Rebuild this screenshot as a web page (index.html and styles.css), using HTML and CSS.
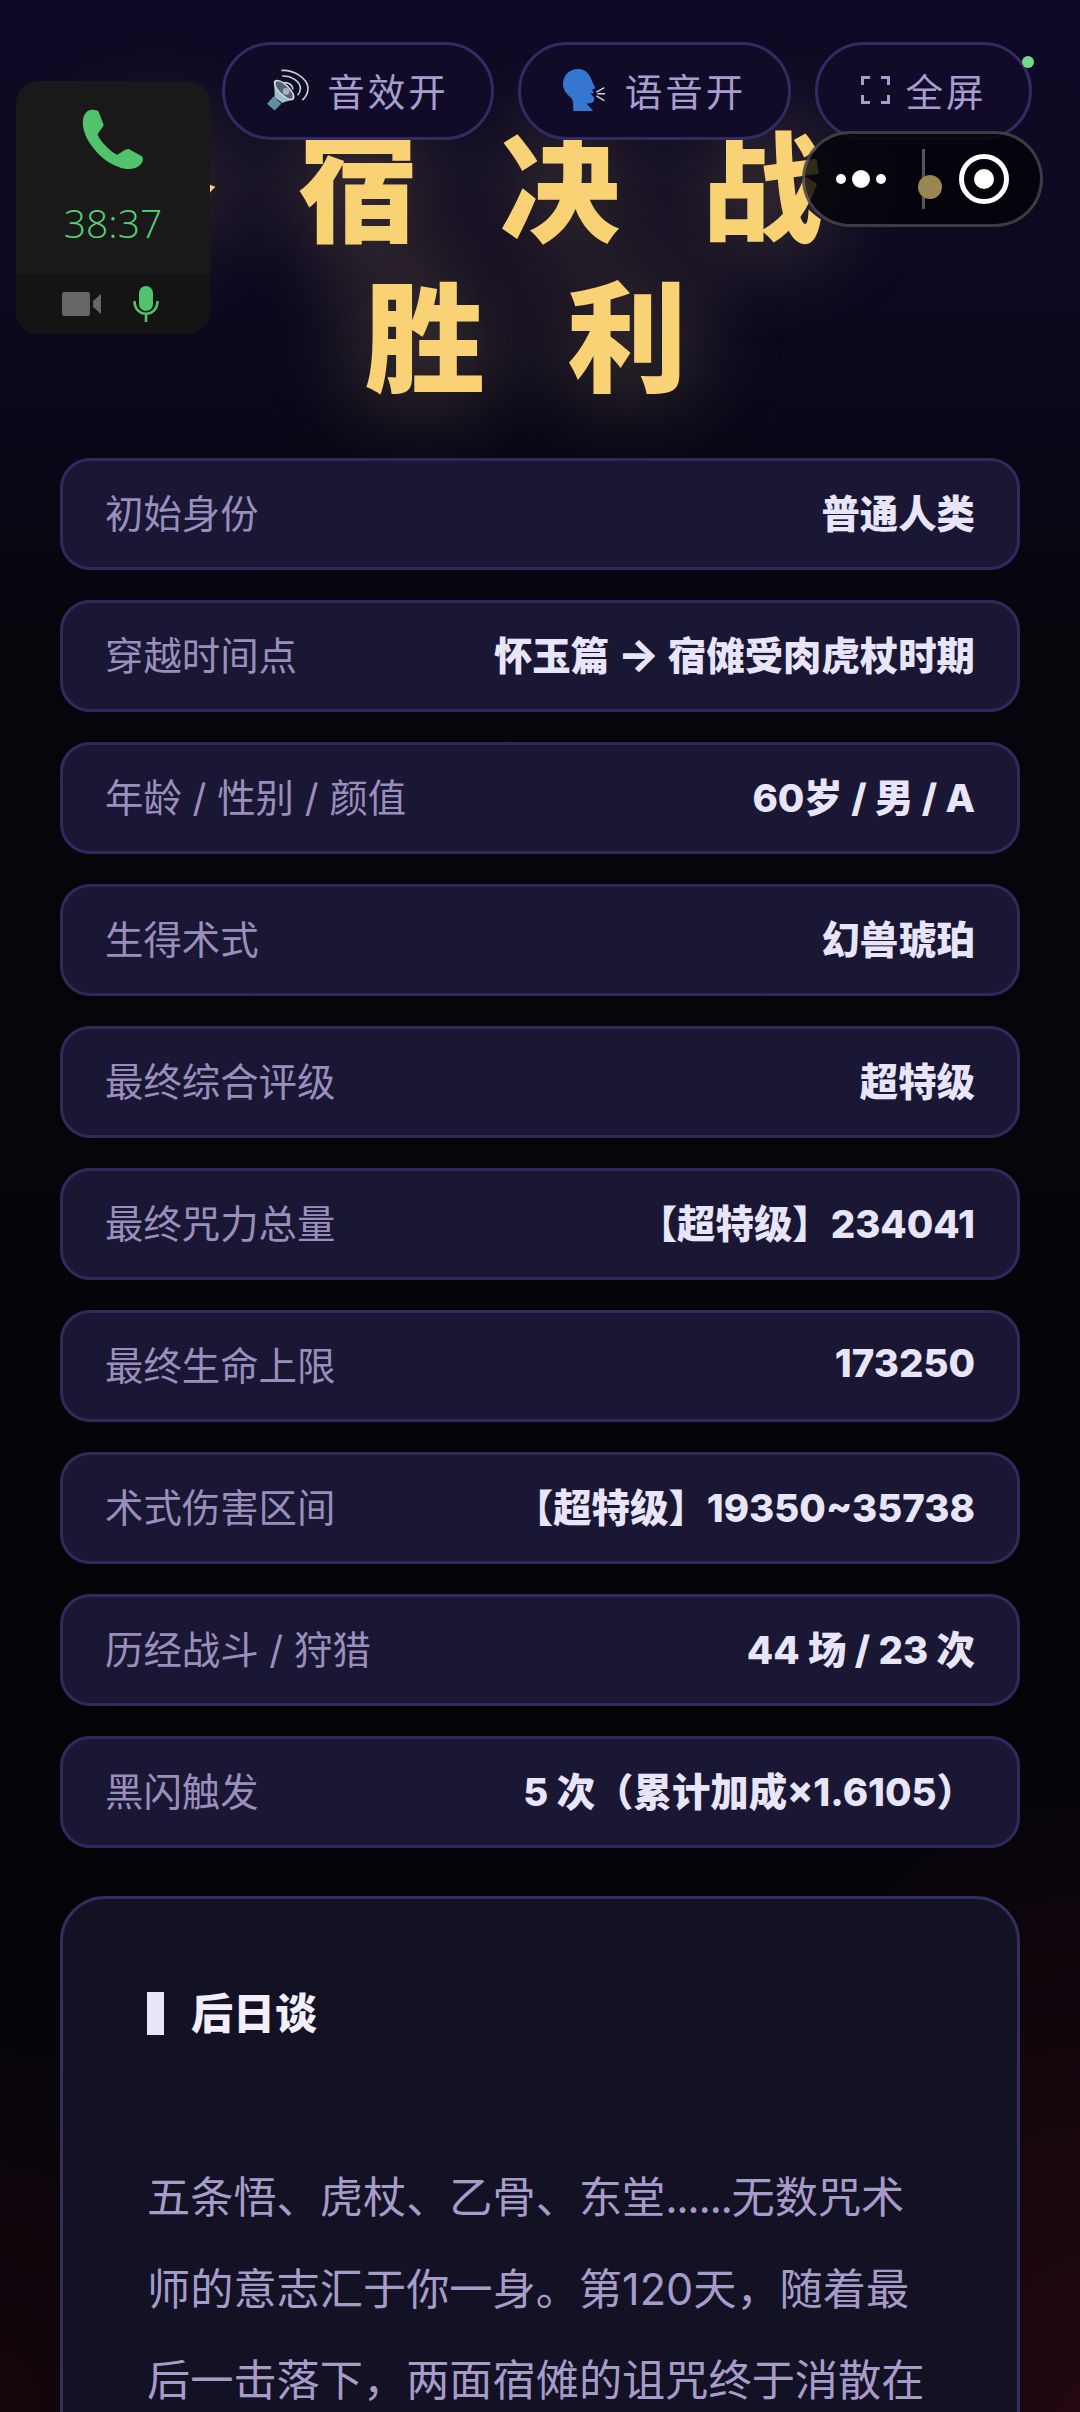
FILE: index.html
```html
<!DOCTYPE html>
<html lang="zh-CN">
<head>
    <meta charset="UTF-8">
    <meta name="viewport" content="width=device-width, initial-scale=1.0">
    <title>终宿决战 胜利</title>
    <link rel="stylesheet" href="styles.css">
</head>
<body>
    <div class="page">
        <div class="toolbar">
            <button class="tool-btn sound-btn" type="button">
                <svg class="tool-icon" viewBox="10 8 44 43">
                    <path d="M10 44 L17 36 L25 44 L18 51 Z" fill="#5f8fa3"/>
                    <path d="M17 20 C18 28 18 33 18 37 L26 43 C30 41 35 41 38 39 Z" fill="#9fbecb"/>
                    <ellipse cx="28" cy="29.500" rx="14" ry="6" transform="rotate(45 28 29.500)" fill="#d4dde2"/>
                    <ellipse cx="28" cy="29.500" rx="12" ry="4.500" transform="rotate(45 28 29.500)" fill="#55626e"/>
                    <circle cx="30" cy="31" r="3.500" fill="#9fb4bf"/>
                    <path d="M25 9 C38 8 52 17 53 27 C53 32 51 37 47 40" fill="none" stroke="#c8d0d6" stroke-width="1.700"/>
                    <path d="M26 15 C34 14 45 20 45 28 C45 31 44 33 42 35" fill="none" stroke="#c8d0d6" stroke-width="1.700"/>
                    <path d="M27 22 C32 21 37 24 37 29" fill="none" stroke="#c8d0d6" stroke-width="1.700"/>
                </svg>
                <span>音效开</span>
            </button>
            <button class="tool-btn voice-btn" type="button">
                <svg class="tool-icon" viewBox="28 28 122 122">
                    <path d="M72 28 C98 28 108 50 112 62 L122 84 L112 88 L118 98 L108 100 L118 110 C120 122 116 128 100 128 L96 128 L116 150 L58 150 C58 128 57 118 52 112 C42 102 28 92 28 72 C28 48 45 28 72 28 Z" fill="#3476d0"/>
                    <path d="M125 95 L148 82 M128 100 L150 100 M125 106 L148 120" fill="none" stroke="#c7d3e8" stroke-width="4"/>
                </svg>
                <span>语音开</span>
            </button>
            <button class="tool-btn screen-btn" type="button">
                <svg class="screen-icon" viewBox="0 0 29 28">
                    <path d="M9 1.500 H1.500 V9 M20 1.500 H27.500 V9 M1.500 19 V26.500 H9 M27.500 19 V26.500 H20" fill="none" stroke="#a99dd0" stroke-width="3"/>
                </svg>
                <span>全屏</span>
            </button>
        </div>

        <h1 class="title">
            <span class="title-line line-one">终宿决战</span>
            <span class="title-line line-two">胜利</span>
        </h1>

        <div class="stats">
            <div class="stat-row"><span class="stat-label">初始身份</span><span class="stat-value">普通人类</span></div>
            <div class="stat-row"><span class="stat-label">穿越时间点</span><span class="stat-value">怀玉篇 <span class="arrow">→</span> 宿傩受肉虎杖时期</span></div>
            <div class="stat-row"><span class="stat-label">年龄 / 性别 / 颜值</span><span class="stat-value">60岁 / 男 / A</span></div>
            <div class="stat-row"><span class="stat-label">生得术式</span><span class="stat-value">幻兽琥珀</span></div>
            <div class="stat-row"><span class="stat-label">最终综合评级</span><span class="stat-value">超特级</span></div>
            <div class="stat-row"><span class="stat-label">最终咒力总量</span><span class="stat-value">【超特级】234041</span></div>
            <div class="stat-row"><span class="stat-label">最终生命上限</span><span class="stat-value">173250</span></div>
            <div class="stat-row"><span class="stat-label">术式伤害区间</span><span class="stat-value">【超特级】19350~35738</span></div>
            <div class="stat-row"><span class="stat-label">历经战斗 / 狩猎</span><span class="stat-value">44 场 / 23 次</span></div>
            <div class="stat-row"><span class="stat-label">黑闪触发</span><span class="stat-value">5 次（累计加成×1.6105）</span></div>
        </div>

        <section class="epilogue">
            <h2 class="epilogue-title">后日谈</h2>
            <p class="epilogue-text">五条悟、虎杖、乙骨、东堂<span class="dots">......</span>无数咒术师的意志汇于你一身。第120天，随着最后一击落下，两面宿傩的诅咒终于消散在</p>
        </section>

        <!-- floating call window -->
        <div class="call-window">
            <div class="call-main">
                <svg class="call-icon" viewBox="245 148 186 186">
                    <path d="M262 154 C272 148 290 150 295 156 L310 195 C308 205 295 215 292 225 C300 245 330 275 350 285 C360 282 372 268 385 268 L425 290 C430 298 428 308 420 315 C405 330 380 332 355 322 C320 310 285 280 262 240 C245 210 240 170 262 154 Z" fill="#50c36c"/>
                </svg>
                <div class="call-time">38:37</div>
            </div>
            <div class="call-bar">
                <svg class="call-video" viewBox="0 0 39 24">
                    <rect x="0" y="0" width="28" height="24" rx="2" fill="#666"/>
                    <path d="M31 9 L39 2 V22 L31 15 Z" fill="#666"/>
                </svg>
                <svg class="call-mic" viewBox="0 0 26 36">
                    <rect x="6" y="0" width="14" height="25" rx="7" fill="#50c36c"/>
                    <path d="M1.500 15 C1.500 32 24.500 32 24.500 15 M13 28 V36" fill="none" stroke="#50c36c" stroke-width="2.600"/>
                </svg>
            </div>
        </div>

        <!-- mini program capsule -->
        <div class="capsule">
            <div class="capsule-dots"><i class="dot"></i><i class="dot dot-big"></i><i class="dot"></i></div>
            <div class="capsule-line"></div>
            <div class="capsule-close"><i></i></div>
            <div class="capsule-float"></div>
        </div>

        <div class="green-dot"></div>
    </div>
</body>
</html>
```

FILE: styles.css
```css
* {
    box-sizing: border-box;
}

body {
    margin: 0;
    background: #05050b;
    font-family: Inter, "Noto Sans CJK SC", sans-serif;
}

.page {
    position: relative;
    width: 1080px;
    height: 2412px;
    overflow: hidden;
    padding: 42px 60px 0;
    background:
        radial-gradient(ellipse 420px 680px at 1080px 2412px, rgba(70, 12, 30, 0.48), transparent),
        radial-gradient(ellipse 300px 450px at 0 2412px, rgba(70, 12, 30, 0.26), transparent),
        linear-gradient(180deg, #0e0a26 0, #0c0920 300px, #05050b 640px, #040408 1700px);
}

.toolbar {
    position: relative;
    z-index: 2;
    display: flex;
    justify-content: flex-end;
    gap: 24px;
    margin-right: -12px;
}

.tool-btn {
    display: flex;
    align-items: center;
    justify-content: center;
    height: 98px;
    padding-bottom: 4px;
    background: #100c28;
    border: 3px solid #322b62;
    border-radius: 49px;
    color: #a99dd0;
    font-family: inherit;
    font-size: 37.500px;
    letter-spacing: 3px;
    white-space: nowrap;
}

.sound-btn {
    width: 272px;
    gap: 18px;
}

.voice-btn {
    width: 273px;
    gap: 20px;
}

.screen-btn {
    width: 217px;
    gap: 16px;
}

.tool-icon {
    width: 42px;
    height: 42px;
}

.screen-icon {
    width: 29px;
    height: 28px;
}

.title {
    margin: -34px -60px 0;
    font-family: "Noto Sans CJK SC", sans-serif;
    font-size: 120px;
    font-weight: 900;
    line-height: 150px;
    letter-spacing: 82px;
    color: #f8d274;
    text-shadow: 0 0 100px rgba(249, 211, 117, 0.38);
}

.title-line {
    display: block;
    white-space: nowrap;
}

.line-one {
    padding-left: 96px;
}

.line-two {
    padding-left: 365px;
}

.stats {
    display: flex;
    flex-direction: column;
    gap: 30px;
    margin-top: 52px;
}

.stat-row {
    display: flex;
    justify-content: space-between;
    align-items: center;
    height: 112px;
    padding: 0 42px 6px 42px;
    background: #1a1735;
    border: 3px solid #302a5c;
    border-radius: 30px;
    font-size: 38.400px;
}

.stat-label {
    color: #9a8fbc;
}

.stat-value {
    color: #e9e5f8;
    font-weight: 800;
}

.arrow {
    font-size: 44px;
    line-height: 1;
}

.epilogue {
    margin-top: 48px;
    height: 700px;
    padding: 93px 84px 0;
    background: #131124;
    border: 3px solid #332d60;
    border-radius: 45px;
}

.epilogue-title {
    margin: 0;
    padding-left: 27px;
    border-left: 17px solid #e9e5f8;
    font-size: 42px;
    font-weight: 800;
    line-height: 43px;
    color: #f2eefc;
}

.epilogue-text {
    margin: 117px 0 0;
    font-size: 43.200px;
    line-height: 91.500px;
    color: #a79cc9;
}

.dots {
    letter-spacing: -1.400px;
}

/* floating call window */
.call-window {
    position: absolute;
    left: 16px;
    top: 81px;
    z-index: 3;
    width: 194px;
    height: 253px;
    border-radius: 22px;
    overflow: hidden;
    background: #191919;
}

.call-main {
    height: 193px;
    padding-top: 28px;
    text-align: center;
}

.call-icon {
    display: block;
    width: 62px;
    height: 62px;
    margin: 0 0 0 66px;
}

.call-time {
    margin-top: 30px;
    font-family: "Open Sans", sans-serif;
    font-size: 39px;
    font-weight: 300;
    line-height: 44px;
    color: #58d076;
}

.call-bar {
    display: flex;
    align-items: center;
    justify-content: center;
    gap: 32px;
    height: 60px;
    padding-right: 5px;
    background: #141414;
}

.call-video {
    width: 39px;
    height: 24px;
}

.call-mic {
    width: 26px;
    height: 36px;
}

/* mini program capsule */
.capsule {
    position: absolute;
    left: 802px;
    top: 131px;
    z-index: 3;
    display: flex;
    align-items: center;
    width: 241px;
    height: 96px;
    background: rgba(4, 4, 8, 0.82);
    border: 3px solid rgba(255, 255, 255, 0.22);
    border-radius: 48px;
}

.capsule-dots {
    display: flex;
    align-items: center;
    gap: 6px;
    margin-left: 31px;
}

.dot {
    width: 10px;
    height: 10px;
    border-radius: 50%;
    background: #fff;
}

.dot-big {
    width: 18px;
    height: 18px;
}

.capsule-line {
    flex: none;
    width: 3px;
    height: 60px;
    margin-left: 36px;
    background: #555;
}

.capsule-close {
    flex: none;
    display: flex;
    align-items: center;
    justify-content: center;
    width: 50px;
    height: 50px;
    margin-left: 34px;
    border: 5px solid #fff;
    border-radius: 50%;
}

.capsule-close i {
    width: 20px;
    height: 20px;
    border-radius: 50%;
    background: #fff;
}

.capsule-float {
    position: absolute;
    left: 113px;
    top: 41px;
    width: 24px;
    height: 24px;
    border-radius: 50%;
    background: #9a8650;
}

.green-dot {
    position: absolute;
    left: 1022px;
    top: 56px;
    z-index: 4;
    width: 12px;
    height: 12px;
    border-radius: 50%;
    background: #6fdc8c;
}
```
